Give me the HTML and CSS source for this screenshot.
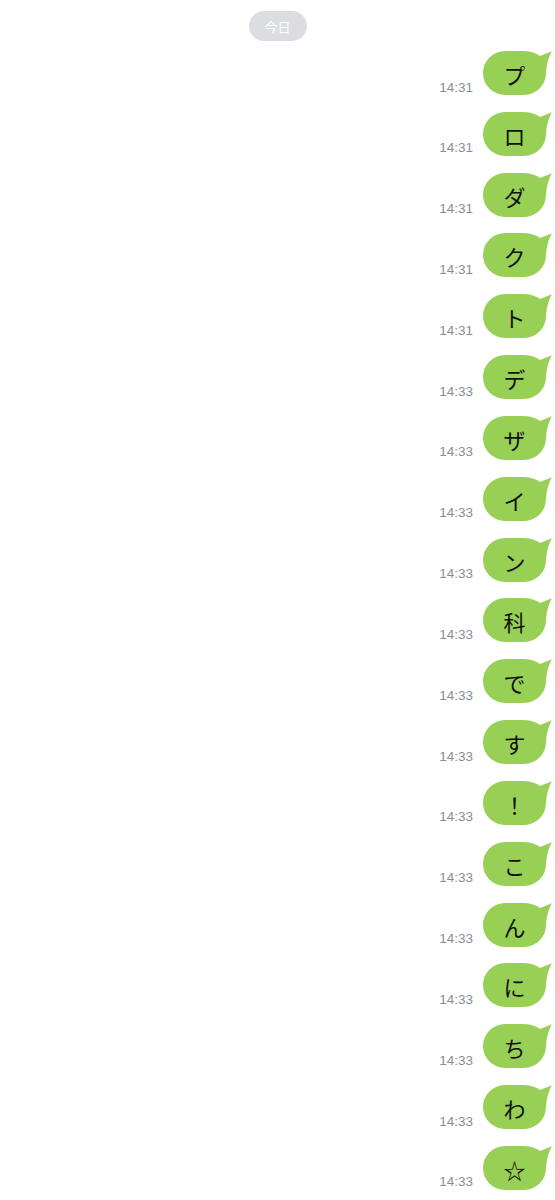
FILE: index.html
```html
<!DOCTYPE html>
<html lang="ja">
<head>
<meta charset="utf-8">
<link rel="stylesheet" href="styles.css">
</head>
<body>
<div class="chat">
  <div class="date-row"><span class="date-pill">&#x4ECA;&#x65E5;</span></div>
  <div class="messages">
    <div class="msg"><span class="time">14:31</span><div class="bubble">&#x30D7;<svg class="tail" viewBox="36 -6 36 30"><path d="M44 0.3 Q52 1.5 57 5 Q62 3.2 68.8 0.3 C66.5 5 64.6 10 63.6 16 L63 22 L41 22 Z"/></svg></div></div>
    <div class="msg"><span class="time">14:31</span><div class="bubble">&#x30ED;<svg class="tail" viewBox="36 -6 36 30"><path d="M44 0.3 Q52 1.5 57 5 Q62 3.2 68.8 0.3 C66.5 5 64.6 10 63.6 16 L63 22 L41 22 Z"/></svg></div></div>
    <div class="msg"><span class="time">14:31</span><div class="bubble">&#x30C0;<svg class="tail" viewBox="36 -6 36 30"><path d="M44 0.3 Q52 1.5 57 5 Q62 3.2 68.8 0.3 C66.5 5 64.6 10 63.6 16 L63 22 L41 22 Z"/></svg></div></div>
    <div class="msg"><span class="time">14:31</span><div class="bubble">&#x30AF;<svg class="tail" viewBox="36 -6 36 30"><path d="M44 0.3 Q52 1.5 57 5 Q62 3.2 68.8 0.3 C66.5 5 64.6 10 63.6 16 L63 22 L41 22 Z"/></svg></div></div>
    <div class="msg"><span class="time">14:31</span><div class="bubble">&#x30C8;<svg class="tail" viewBox="36 -6 36 30"><path d="M44 0.3 Q52 1.5 57 5 Q62 3.2 68.8 0.3 C66.5 5 64.6 10 63.6 16 L63 22 L41 22 Z"/></svg></div></div>
    <div class="msg"><span class="time">14:33</span><div class="bubble">&#x30C7;<svg class="tail" viewBox="36 -6 36 30"><path d="M44 0.3 Q52 1.5 57 5 Q62 3.2 68.8 0.3 C66.5 5 64.6 10 63.6 16 L63 22 L41 22 Z"/></svg></div></div>
    <div class="msg"><span class="time">14:33</span><div class="bubble">&#x30B6;<svg class="tail" viewBox="36 -6 36 30"><path d="M44 0.3 Q52 1.5 57 5 Q62 3.2 68.8 0.3 C66.5 5 64.6 10 63.6 16 L63 22 L41 22 Z"/></svg></div></div>
    <div class="msg"><span class="time">14:33</span><div class="bubble">&#x30A4;<svg class="tail" viewBox="36 -6 36 30"><path d="M44 0.3 Q52 1.5 57 5 Q62 3.2 68.8 0.3 C66.5 5 64.6 10 63.6 16 L63 22 L41 22 Z"/></svg></div></div>
    <div class="msg"><span class="time">14:33</span><div class="bubble">&#x30F3;<svg class="tail" viewBox="36 -6 36 30"><path d="M44 0.3 Q52 1.5 57 5 Q62 3.2 68.8 0.3 C66.5 5 64.6 10 63.6 16 L63 22 L41 22 Z"/></svg></div></div>
    <div class="msg"><span class="time">14:33</span><div class="bubble">&#x79D1;<svg class="tail" viewBox="36 -6 36 30"><path d="M44 0.3 Q52 1.5 57 5 Q62 3.2 68.8 0.3 C66.5 5 64.6 10 63.6 16 L63 22 L41 22 Z"/></svg></div></div>
    <div class="msg"><span class="time">14:33</span><div class="bubble">&#x3067;<svg class="tail" viewBox="36 -6 36 30"><path d="M44 0.3 Q52 1.5 57 5 Q62 3.2 68.8 0.3 C66.5 5 64.6 10 63.6 16 L63 22 L41 22 Z"/></svg></div></div>
    <div class="msg"><span class="time">14:33</span><div class="bubble">&#x3059;<svg class="tail" viewBox="36 -6 36 30"><path d="M44 0.3 Q52 1.5 57 5 Q62 3.2 68.8 0.3 C66.5 5 64.6 10 63.6 16 L63 22 L41 22 Z"/></svg></div></div>
    <div class="msg"><span class="time">14:33</span><div class="bubble">&#xFF01;<svg class="tail" viewBox="36 -6 36 30"><path d="M44 0.3 Q52 1.5 57 5 Q62 3.2 68.8 0.3 C66.5 5 64.6 10 63.6 16 L63 22 L41 22 Z"/></svg></div></div>
    <div class="msg"><span class="time">14:33</span><div class="bubble">&#x3053;<svg class="tail" viewBox="36 -6 36 30"><path d="M44 0.3 Q52 1.5 57 5 Q62 3.2 68.8 0.3 C66.5 5 64.6 10 63.6 16 L63 22 L41 22 Z"/></svg></div></div>
    <div class="msg"><span class="time">14:33</span><div class="bubble">&#x3093;<svg class="tail" viewBox="36 -6 36 30"><path d="M44 0.3 Q52 1.5 57 5 Q62 3.2 68.8 0.3 C66.5 5 64.6 10 63.6 16 L63 22 L41 22 Z"/></svg></div></div>
    <div class="msg"><span class="time">14:33</span><div class="bubble">&#x306B;<svg class="tail" viewBox="36 -6 36 30"><path d="M44 0.3 Q52 1.5 57 5 Q62 3.2 68.8 0.3 C66.5 5 64.6 10 63.6 16 L63 22 L41 22 Z"/></svg></div></div>
    <div class="msg"><span class="time">14:33</span><div class="bubble">&#x3061;<svg class="tail" viewBox="36 -6 36 30"><path d="M44 0.3 Q52 1.5 57 5 Q62 3.2 68.8 0.3 C66.5 5 64.6 10 63.6 16 L63 22 L41 22 Z"/></svg></div></div>
    <div class="msg"><span class="time">14:33</span><div class="bubble">&#x308F;<svg class="tail" viewBox="36 -6 36 30"><path d="M44 0.3 Q52 1.5 57 5 Q62 3.2 68.8 0.3 C66.5 5 64.6 10 63.6 16 L63 22 L41 22 Z"/></svg></div></div>
    <div class="msg"><span class="time">14:33</span><div class="bubble">&#x2606;<svg class="tail" viewBox="36 -6 36 30"><path d="M44 0.3 Q52 1.5 57 5 Q62 3.2 68.8 0.3 C66.5 5 64.6 10 63.6 16 L63 22 L41 22 Z"/></svg></div></div>
  </div>
</div>
</body>
</html>
```
FILE: styles.css
```css
html, body {
  margin: 0;
  padding: 0;
  background: #ffffff;
}
body {
  font-family: "Noto Sans CJK JP", "Noto Sans", sans-serif;
}
.chat {
  width: 555px;
  padding-top: 11px;
}
.date-row {
  display: flex;
  justify-content: center;
}
.date-pill {
  display: flex;
  align-items: center;
  justify-content: center;
  width: 58px;
  height: 30px;
  border-radius: 15px;
  background: #dcdde1;
  color: #ffffff;
  font-size: 13px;
  line-height: 1;
}
.messages {
  display: flex;
  flex-direction: column;
  gap: 16.83px;
  padding-top: 10px;
  padding-right: 9px;
}
.msg {
  display: flex;
  justify-content: flex-end;
  align-items: flex-end;
  gap: 10px;
}
.time {
  font-family: "Liberation Sans", Arial, sans-serif;
  font-size: 13.5px;
  color: #8a8d96;
  line-height: 1;
  padding-bottom: 1px;
}
.bubble {
  position: relative;
  width: 63px;
  height: 44px;
  border-radius: 22px;
  background: #97d055;
  color: #111111;
  font-size: 22px;
  line-height: 46px;
  text-align: center;
}
.tail {
  position: absolute;
  left: 36px;
  top: -6px;
  width: 36px;
  height: 30px;
  fill: #97d055;
  overflow: visible;
}
```
